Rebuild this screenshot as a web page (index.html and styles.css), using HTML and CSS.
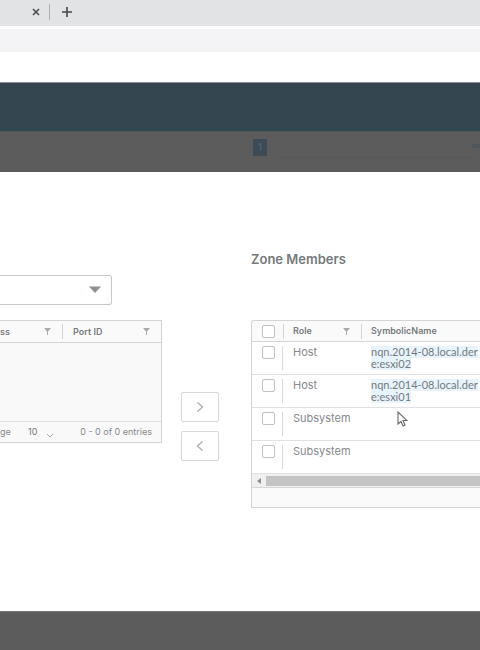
FILE: index.html
```html
<!DOCTYPE html>
<html lang="en">
<head>
<meta charset="utf-8">
<title>Zone Members</title>
<link rel="stylesheet" href="styles.css">
</head>
<body>
<div class="tabs">
  <button class="tab-button" aria-label="Close tab"><svg width="8" height="8" viewBox="0 0 8 8"><path d="M1 1l6 6M7 1l-6 6" stroke="#4b4e50" stroke-width="1.6"/></svg></button>
  <span class="tab-rule"></span>
  <button class="tab-button" aria-label="New tab"><svg width="10" height="10" viewBox="0 0 10 10"><path d="M5 0v10M0 5h10" stroke="#45494b" stroke-width="1.6"/></svg></button>
</div>
<div class="address"></div>
<div class="bookmarks"></div>
<header class="app-header"></header>
<div class="backdrop-top">
  <span class="badge">1</span>
  <span class="ghost-line"></span>
  <span class="ghost-mark"></span>
</div>
<main class="modal">
  <section class="available">
    <div class="select-wrap">
      <select class="picker" aria-label="Filter"><option></option></select>
      <svg class="caret" width="12" height="7" viewBox="0 0 12 7"><path d="M0 .5h12L6 7z" fill="#8b9296"/></svg>
    </div>
    <div class="left-grid">
      <table class="left-table">
        <colgroup><col class="col-address"><col></colgroup>
        <thead><tr>
          <th><div class="head"><span>ss</span><svg class="filter" width="7" height="7" viewBox="0 0 7 7"><path d="M0 0h7L4 3.500V7H3V3.500z"/></svg></div></th>
          <th><div class="head"><span>Port ID</span><svg class="filter" width="7" height="7" viewBox="0 0 7 7"><path d="M0 0h7L4 3.500V7H3V3.500z"/></svg></div></th>
        </tr></thead>
        <tbody><tr><td colspan="2"></td></tr></tbody>
      </table>
      <div class="pager">
        <span class="page-word">ge</span>
        <span class="page-size">10</span>
        <svg class="chevron" width="8" height="5" viewBox="0 0 8 5"><path d="M1 1l3 3 3-3" fill="none" stroke="#a5a9ab"/></svg>
        <span class="entries">0 - 0 of 0 entries</span>
      </div>
    </div>
  </section>
  <div class="movers">
    <button class="move" aria-label="Add"><svg width="8" height="12" viewBox="0 0 8 12"><path d="M1.500 1.500L6.500 6l-5 4.500" fill="none" stroke="#b0b3b5" stroke-width="1.500"/></svg></button>
    <button class="move" aria-label="Remove"><svg width="8" height="12" viewBox="0 0 8 12"><path d="M6.500 1.500L1.500 6l5 4.500" fill="none" stroke="#b0b3b5" stroke-width="1.500"/></svg></button>
  </div>
  <section class="members">
    <h2>Zone Members</h2>
    <div class="right-grid">
      <table class="right-table">
        <colgroup><col class="col-check"><col class="col-role"><col></colgroup>
        <thead><tr>
          <th><input type="checkbox" aria-label="Select all"></th>
          <th><div class="head"><span>Role</span><svg class="filter" width="7" height="7" viewBox="0 0 7 7"><path d="M0 0h7L4 3.500V7H3V3.500z"/></svg></div></th>
          <th><div class="head"><span>SymbolicName</span></div></th>
        </tr></thead>
        <tbody>
          <tr><td><input type="checkbox" aria-label="Select esxi02"></td><td>Host</td><td><mark>nqn.2014-08.local.der</mark><mark>e:esxi02</mark></td></tr>
          <tr><td><input type="checkbox" aria-label="Select esxi01"></td><td>Host</td><td><mark>nqn.2014-08.local.der</mark><mark>e:esxi01</mark></td></tr>
          <tr><td><input type="checkbox" aria-label="Select subsystem 1"></td><td>Subsystem</td><td></td></tr>
          <tr><td><input type="checkbox" aria-label="Select subsystem 2"></td><td>Subsystem</td><td></td></tr>
        </tbody>
      </table>
      <div class="scrollbar">
        <svg class="scroll-arrow" width="4" height="6" viewBox="0 0 4 6"><path d="M4 0v6L0 3z" fill="#8d8d8d"/></svg>
        <span class="thumb"></span>
      </div>
      <div class="right-foot"></div>
    </div>
    <svg class="cursor" width="11" height="16" viewBox="0 0 11 16"><path d="M1 1v12l3-2.500L6 15l2-1-2-4.500h4z" fill="#fff" stroke="#64686b" stroke-width="1.100"/></svg>
  </section>
</main>
<div class="backdrop-bottom"></div>
</body>
</html>
```

FILE: styles.css
```css
* { box-sizing: border-box; }

body {
  margin: 0;
  min-height: 100vh;
  display: flex;
  flex-direction: column;
  overflow: hidden;
  background: #fff;
  color: #85898c;
  font-family: Inter, "Liberation Sans", sans-serif;
  font-size: 11px;
  line-height: 12px;
}

svg { display: block; flex: none; }

button {
  padding: 0;
  display: flex;
  align-items: center;
  justify-content: center;
}

/* Browser chrome */
.tabs {
  height: 26px;
  padding: 0 0 2px 31px;
  display: flex;
  align-items: center;
  gap: 8px;
  background: #e2e3e5;
}
.tab-button { border: 0; background: none; min-width: 10px; }
.tab-rule { width: 1px; height: 16px; background: #a9b2b3; margin-right: 4px; }
.address { height: 26px; border-top: 3px solid #fcfcfc; background: #f4f4f6; }
.bookmarks { height: 30px; }

/* Dimmed application */
.app-header { height: 49px; background: #34464f; border-top: 1px solid #88919a; box-shadow: inset 0 3px 2px #3a4450; }
.backdrop-top {
  height: 41px;
  padding: 7px 0 0 253px;
  display: flex;
  background: #5c5c5c;
  border-top: 1px solid #535759;
}
.badge { width: 14px; height: 17px; background: #3d4b57; color: #59636c; text-align: center; line-height: 17px; }
.ghost-line { flex: 1; height: 19px; margin-left: 12px; border-bottom: 1px solid #575859; }
.ghost-mark { width: 8px; height: 4px; margin-top: 5px; background: #50565a; }
.backdrop-bottom { flex: 1; background: #5c5c5c; border-top: 1px solid #777; }

/* Modal */
.modal {
  height: 439px;
  display: grid;
  grid-template-columns: 162px 89px 1fr;
  background: #fff;
}
.available { padding-top: 103px; }
.select-wrap { position: relative; width: 112px; }
.picker {
  display: block;
  width: 100%;
  height: 30px;
  appearance: none;
  background: #fff;
  border: 1px solid #c6c9ca;
  border-left: 0;
  border-radius: 0 3px 3px 0;
}
.caret { position: absolute; right: 11px; top: 11px; pointer-events: none; }

table { border-collapse: separate; border-spacing: 0; table-layout: fixed; width: 100%; }
th, td { padding: 0; text-align: left; font-weight: 400; }
th { font-weight: 600; font-size: 9px; color: #777c7f; background: #fafafa; border-bottom: 1px solid #d2d4d5; }
.head { display: flex; align-items: center; justify-content: space-between; height: 15px; }
.filter { fill: #a7abad; }

.left-grid { margin-top: 15px; border: 1px solid #d2d4d5; border-left: 0; background: #f9f9f9; }
.col-address { width: 63px; }
.left-table th { height: 22px; }
.left-table .head { padding: 0 11px 0 10px; }
.left-table th:first-child .head { padding-left: 0; border-right: 1px solid #cfd1d2; }
.left-table td { height: 78px; }
.pager {
  height: 21px;
  padding-right: 9px;
  display: flex;
  align-items: center;
  border-top: 1px solid #dddfe0;
  font-size: 9px;
}
.page-word { width: 28px; }
.page-size { width: 18px; color: #73787b; }
.chevron { margin-top: 6px; }
.entries { margin-left: auto; }

.movers { padding: 220px 0 0 19px; display: flex; flex-direction: column; gap: 9px; }
.move { width: 38px; height: 30px; background: #fff; border: 1px solid #d6d8d9; border-radius: 2px; }

.members { position: relative; min-width: 0; padding-top: 79px; }
h2 { margin: 0; font-size: 13px; line-height: 16px; font-weight: 600; color: #74797c; }
.right-grid {
  margin-top: 53px;
  border: 1px solid #d2d4d5;
  border-right: 0;
  border-radius: 3px 0 0 0;
  overflow: hidden;
}
.col-check { width: 31px; }
.col-role { width: 78px; }
.right-table th { height: 21px; }
.right-table th .head { padding: 0 11px 0 9px; border-left: 1px solid #d2d4d5; }
.right-table td { height: 33px; padding: 4px 0 0 10px; vertical-align: top; border-bottom: 1px solid #dfe1e2; white-space: nowrap; }
.right-table td:first-child { background: linear-gradient(#d9dbdc, #d9dbdc) right 4px / 1px 24px no-repeat; }
.right-table th:first-child { padding-left: 10px; }
mark { display: block; width: max-content; background: #e8f4fc; color: #747a7e; font-family: Lato, sans-serif; }
input {
  display: block;
  width: 13px;
  height: 13px;
  margin: 0;
  appearance: none;
  background: #fff;
  border: 1px solid #bfc2c4;
  border-radius: 2px;
}
.scrollbar { height: 13px; padding-left: 5px; display: flex; align-items: center; gap: 5px; background: #f0f0f0; }
.thumb { flex: 1; height: 10px; background: #c4c4c4; }
.right-foot { height: 20px; background: #fafafa; border-top: 1px solid #d6d7d8; }
.cursor { position: absolute; left: 146px; top: 239px; }
```
